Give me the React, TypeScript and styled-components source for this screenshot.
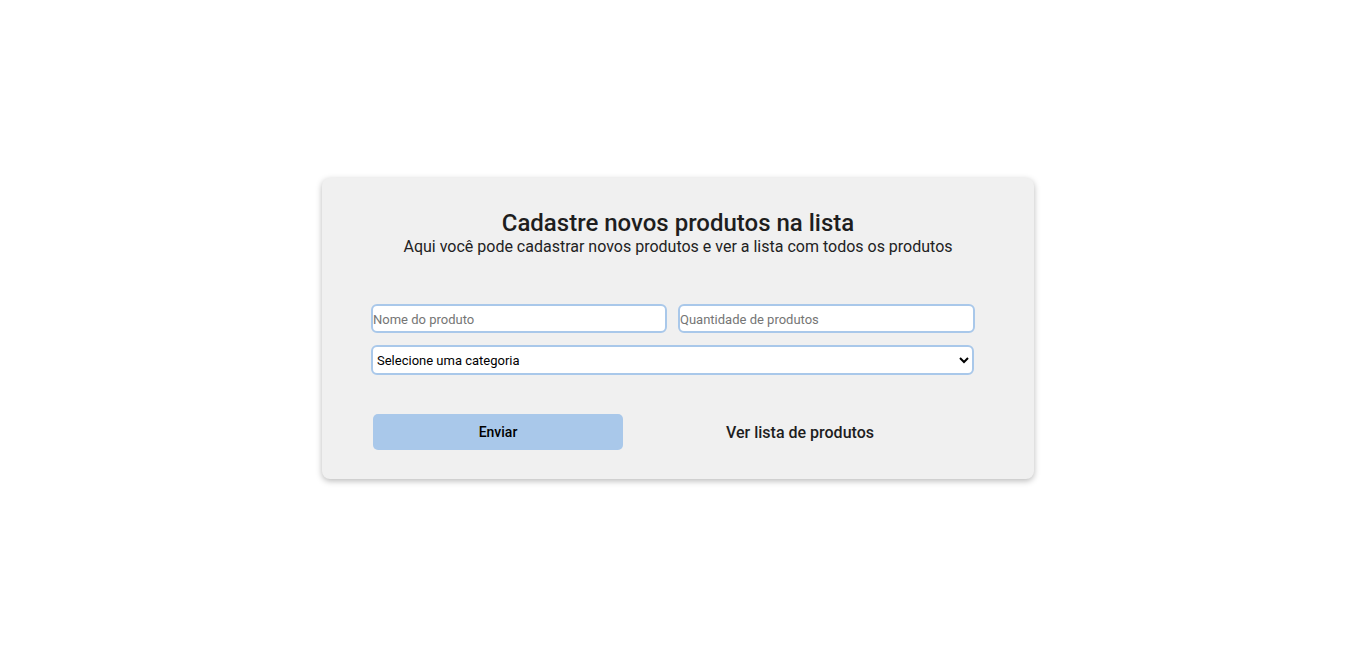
import React from "react";
import styled, { createGlobalStyle } from "styled-components";

const Global = createGlobalStyle`
  * { box-sizing: border-box; }
  html, body { margin: 0; padding: 0; background: #ffffff; }
  body { font-family: Roboto, "Liberation Sans", Arial, sans-serif; }
`;

const Page = styled.main`
  min-height: 655px;
  display: flex;
  align-items: center;
  justify-content: center;
  padding: 2px 0 0 1px;
`;

const Card = styled.section`
  width: 712px;
  height: 301px;
  background: #f0f0f0;
  border-radius: 8px;
  box-shadow: 0 2px 6px rgba(0, 0, 0, 0.28);
  padding: 31px 0 29px;
  display: flex;
  flex-direction: column;
`;

const Header = styled.header`
  text-align: center;
  color: #1e1e1e;
`;

const Title = styled.h1`
  margin: 0;
  font-size: 24px;
  font-weight: 500;
  line-height: 28px;
`;

const Subtitle = styled.p`
  margin: 0;
  font-size: 16px;
  font-weight: 400;
  line-height: 19px;
  color: #222;
`;

const Form = styled.form`
  width: 604px;
  margin: 48px 0 0 49px;
  display: flex;
  flex-direction: column;
`;

const InputRow = styled.div`
  display: grid;
  grid-template-columns: 296px 297px;
  column-gap: 11px;
`;

const Field = styled.input`
  height: 29px;
  width: 100%;
  border: 2px solid #a9c8ea;
  border-radius: 6px;
  background: #fff;
  padding: 1px 0 0;
  font-family: Roboto, "Liberation Sans", Arial, sans-serif;
  font-size: 13px;
  color: #222;
  outline: none;
  &::placeholder { color: #757575; }
`;

const Select = styled.select`
  margin-top: 12px;
  height: 30px;
  width: 603px;
  border: 2px solid #a9c8ea;
  border-radius: 6px;
  background: #fff;
  padding: 0;
  font-family: Roboto, "Liberation Sans", Arial, sans-serif;
  font-size: 13px;
  color: #000;
  outline: none;
`;

const Actions = styled.div`
  margin-top: 39px;
  padding-left: 2px;
  display: flex;
  align-items: center;
  gap: 2px;
`;

const SubmitButton = styled.button`
  width: 250px;
  height: 36px;
  border: none;
  border-radius: 5px;
  background: #a9c8ea;
  font-family: Roboto, "Liberation Sans", Arial, sans-serif;
  font-size: 14px;
  font-weight: 500;
  color: #000;
  cursor: pointer;
`;

const ListLink = styled.a`
  flex: 1;
  text-align: center;
  font-size: 16px;
  font-weight: 500;
  color: #1e1e1e;
  text-decoration: none;
  cursor: pointer;
`;

export default function App() {
  return (
    <>
      <Global />
      <Page>
        <Card>
          <Header>
            <Title>Cadastre novos produtos na lista</Title>
            <Subtitle>Aqui você pode cadastrar novos produtos e ver a lista com todos os produtos</Subtitle>
          </Header>
          <Form onSubmit={(e) => e.preventDefault()}>
            <InputRow>
              <Field type="text" placeholder="Nome do produto" />
              <Field type="number" placeholder="Quantidade de produtos" />
            </InputRow>
            <Select defaultValue="">
              <option value="">Selecione uma categoria</option>
              <option value="alimentos">Alimentos</option>
              <option value="limpeza">Limpeza</option>
            </Select>
            <Actions>
              <SubmitButton type="submit">Enviar</SubmitButton>
              <ListLink>Ver lista de produtos</ListLink>
            </Actions>
          </Form>
        </Card>
      </Page>
    </>
  );
}
